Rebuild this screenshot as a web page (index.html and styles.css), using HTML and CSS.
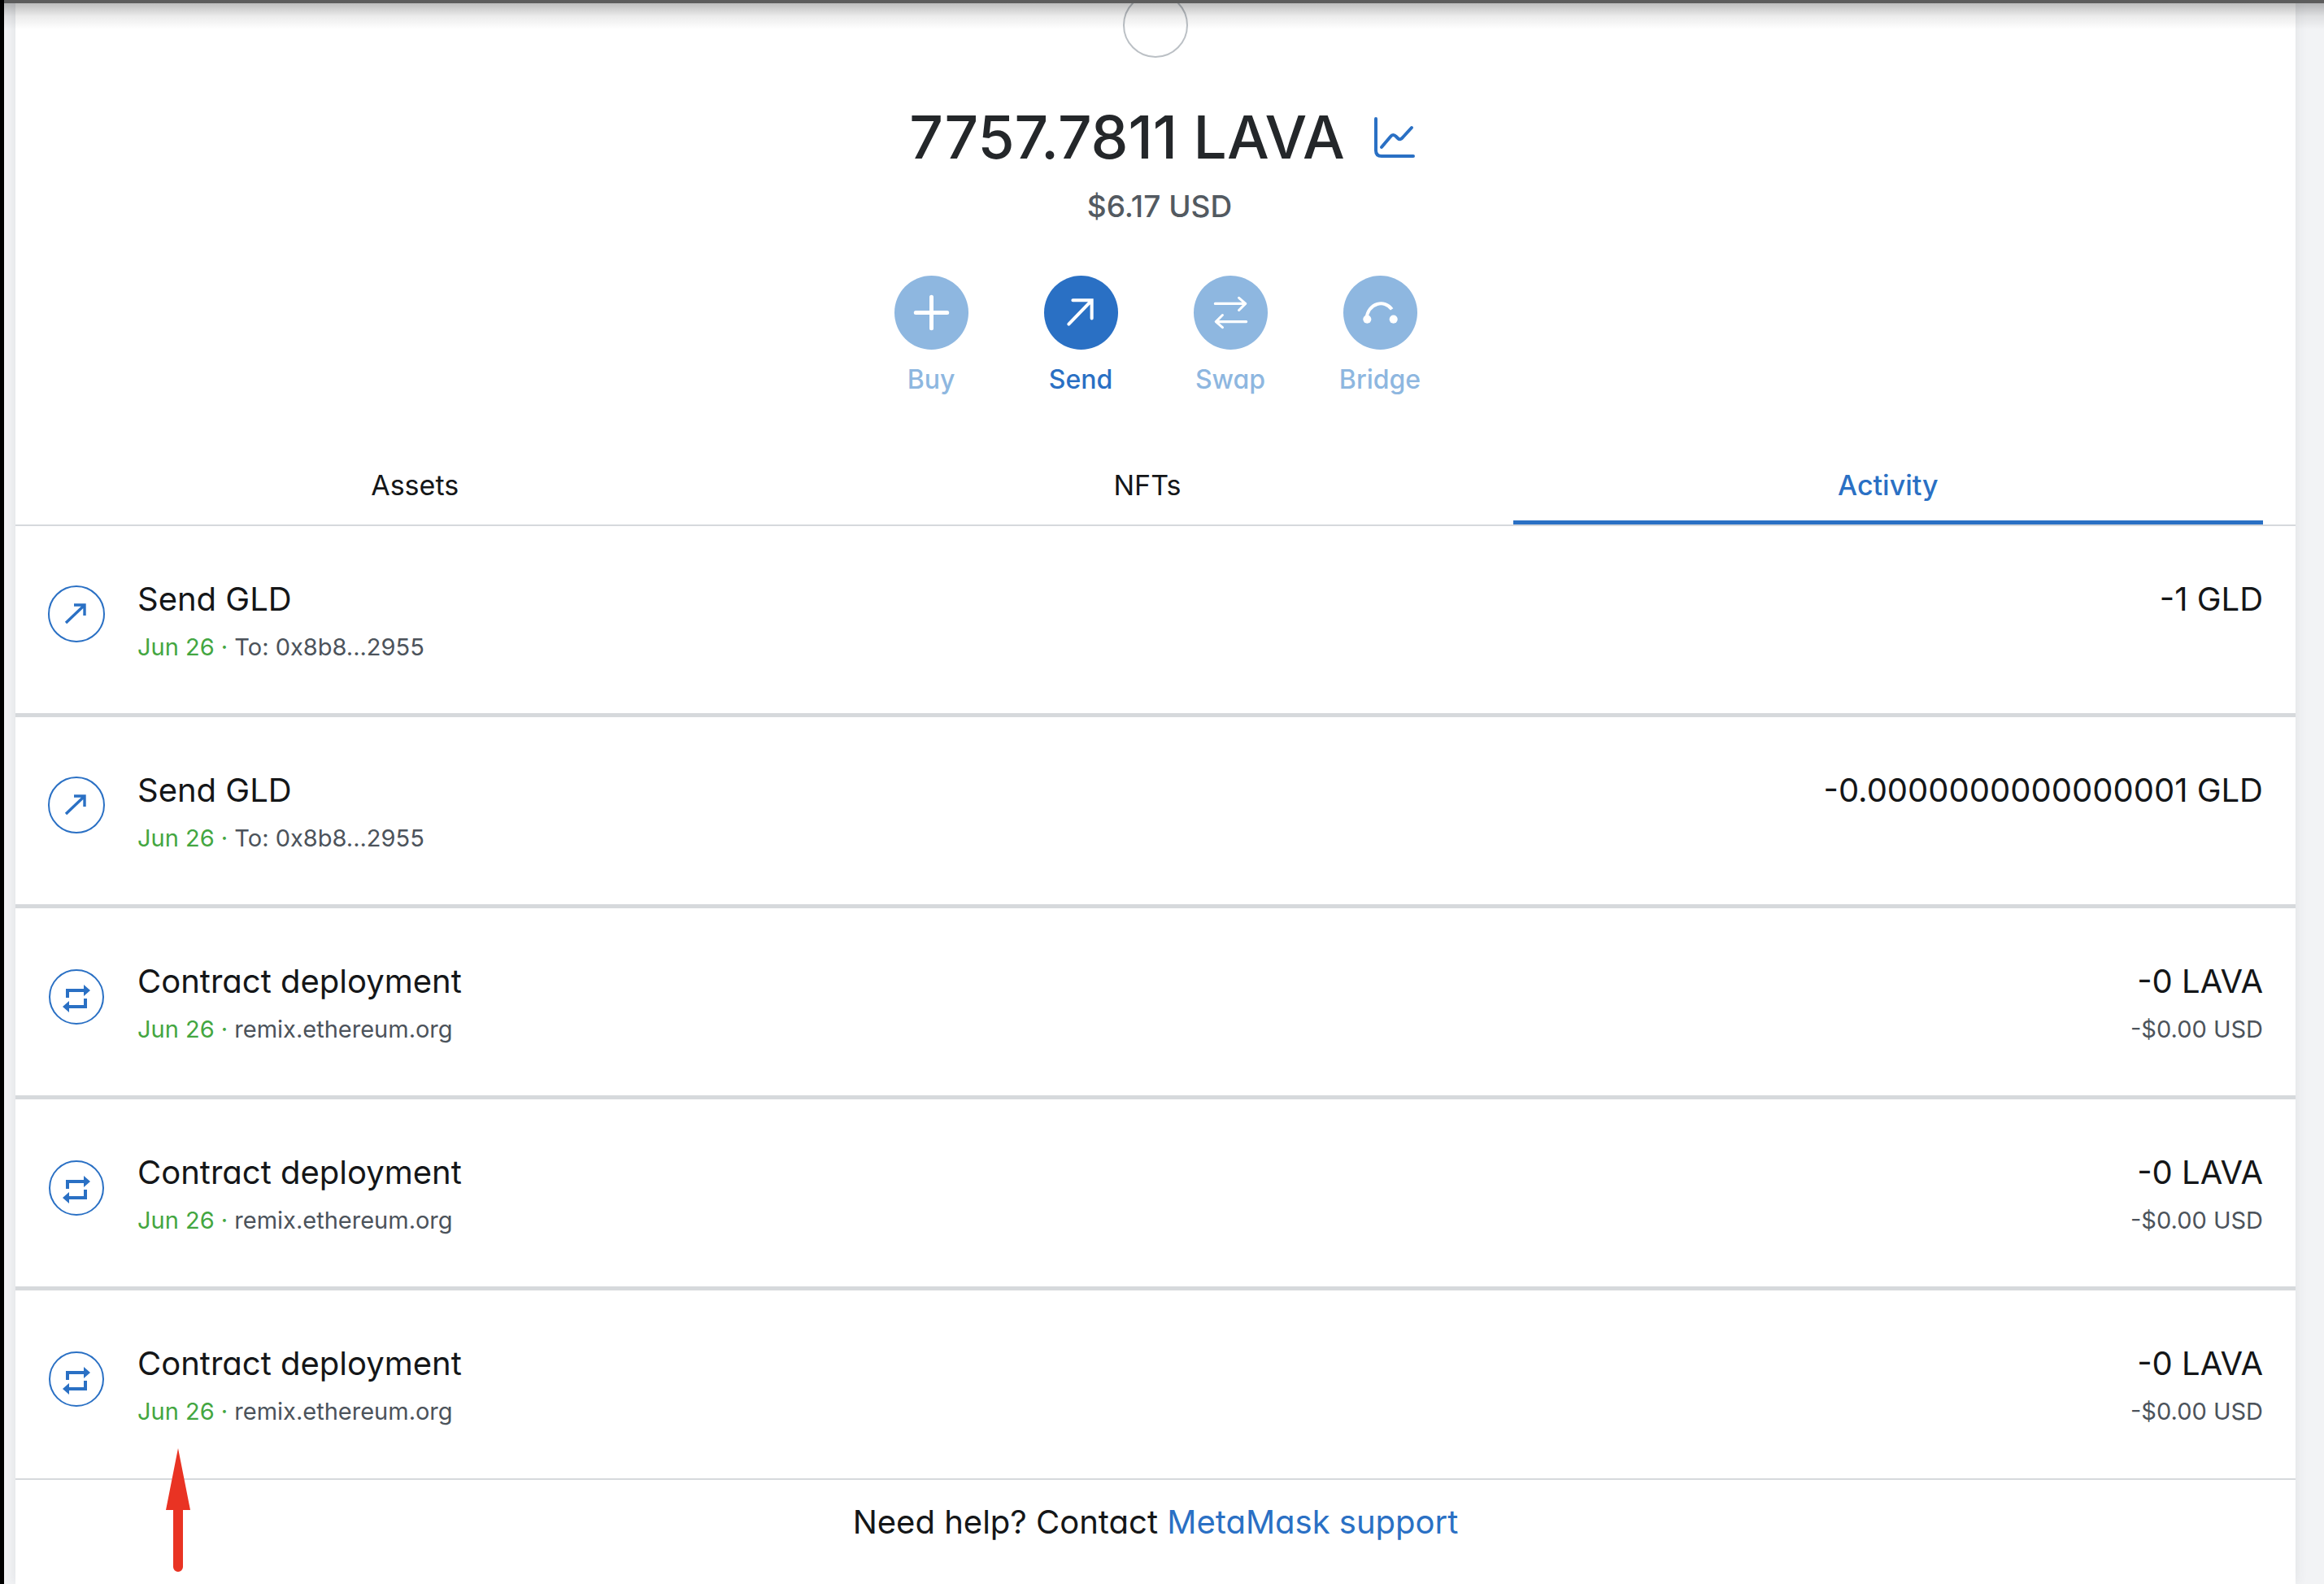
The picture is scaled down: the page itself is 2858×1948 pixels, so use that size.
FILE: index.html
```html
<!DOCTYPE html>
<html lang="en">
<head>
<meta charset="utf-8">
<meta name="viewport" content="width=device-width, initial-scale=1">
<title>MetaMask</title>
<link rel="stylesheet" href="styles.css">
</head>
<body>
<svg class="sprite" aria-hidden="true">
  <symbol id="icon-send" viewBox="-35 -35 70 70">
    <circle r="34" fill="none" stroke="currentColor" stroke-width="2"/>
    <path d="M-13 11 9 -10M-3 -11H10V2" fill="none" stroke="currentColor" stroke-width="3.4"/>
  </symbol>
  <symbol id="icon-contract" viewBox="-35 -35 70 70">
    <circle cy="1" r="33" fill="none" stroke="currentColor" stroke-width="2"/>
    <path d="M-11 2V-7H10M11 3V13H-10" fill="none" stroke="currentColor" stroke-width="4"/>
    <path d="M9 -14 17 -7 9 0ZM-9 6-17 13-9 20Z" fill="currentColor"/>
  </symbol>
</svg>
<div class="window-edge"></div>
<main class="wallet">
  <section class="overview">
    <div class="token-ring"></div>
    <div class="balance">
      <h1 class="balance-amount">7757.7811 LAVA</h1>
      <a class="portfolio" href="#" aria-label="Portfolio">
        <svg viewBox="0 0 50 50" fill="none" stroke="currentColor" stroke-width="4" stroke-linecap="round" stroke-linejoin="round"><path d="M2 2V41Q2 48 9 48H48M9 37 20 24Q23 20 27 24L29 26Q32 29 35 25L46 13"/></svg>
      </a>
    </div>
    <p class="balance-fiat">$6.17 USD</p>
    <div class="actions">
      <button class="action" disabled>
        <svg class="disc" viewBox="-45 -45 90 90" stroke-width="5" stroke-linecap="round"><path d="M-19 0H19M0 -19V19"/></svg>
        <span>Buy</span>
      </button>
      <button class="action">
        <svg class="disc" viewBox="-45 -45 90 90" stroke-width="4" stroke-linecap="round"><path d="M-15 14 12 -14M-10 -15H13V7"/></svg>
        <span>Send</span>
      </button>
      <button class="action" disabled>
        <svg class="disc" viewBox="-45 -45 90 90" stroke-width="3" stroke-linecap="round" stroke-linejoin="round"><path d="M-19 -11H18M10 -18 18 -11 10 -3M19 11H-18M-10 3-18 11-10 18"/></svg>
        <span>Swap</span>
      </button>
      <button class="action" disabled>
        <svg class="disc" viewBox="-45 -45 90 90" stroke-width="4"><path d="M-17 8C-15 -13 6 -16 14 -4"/><circle class="dot" cx="-16" cy="8" r="5"/><circle class="dot" cx="16" cy="8" r="5"/></svg>
        <span>Bridge</span>
      </button>
    </div>
  </section>
  <nav class="tabs">
    <button class="tab">Assets</button>
    <button class="tab">NFTs</button>
    <button class="tab tab-active">Activity</button>
  </nav>
  <ul class="activity">
    <li class="entry">
      <svg class="entry-icon"><use href="#icon-send"/></svg>
      <div class="entry-info">
        <h2 class="entry-title">Send GLD</h2>
        <p class="entry-sub"><span class="date">Jun 26 ·</span> To: 0x8b8...2955</p>
      </div>
      <div class="entry-value"><p class="entry-title">-1 GLD</p></div>
    </li>
    <li class="entry">
      <svg class="entry-icon"><use href="#icon-send"/></svg>
      <div class="entry-info">
        <h2 class="entry-title">Send GLD</h2>
        <p class="entry-sub"><span class="date">Jun 26 ·</span> To: 0x8b8...2955</p>
      </div>
      <div class="entry-value"><p class="entry-title">-0.0000000000000001 GLD</p></div>
    </li>
    <li class="entry">
      <svg class="entry-icon"><use href="#icon-contract"/></svg>
      <div class="entry-info">
        <h2 class="entry-title">Contract deployment</h2>
        <p class="entry-sub"><span class="date">Jun 26 ·</span> remix.ethereum.org</p>
      </div>
      <div class="entry-value"><p class="entry-title">-0 LAVA</p><p class="entry-sub">-$0.00 USD</p></div>
    </li>
    <li class="entry">
      <svg class="entry-icon"><use href="#icon-contract"/></svg>
      <div class="entry-info">
        <h2 class="entry-title">Contract deployment</h2>
        <p class="entry-sub"><span class="date">Jun 26 ·</span> remix.ethereum.org</p>
      </div>
      <div class="entry-value"><p class="entry-title">-0 LAVA</p><p class="entry-sub">-$0.00 USD</p></div>
    </li>
    <li class="entry">
      <svg class="entry-icon"><use href="#icon-contract"/></svg>
      <div class="entry-info">
        <h2 class="entry-title">Contract deployment</h2>
        <p class="entry-sub"><span class="date">Jun 26 ·</span> remix.ethereum.org</p>
      </div>
      <div class="entry-value"><p class="entry-title">-0 LAVA</p><p class="entry-sub">-$0.00 USD</p></div>
      <svg class="marker" viewBox="0 0 32 152" aria-hidden="true"><path d="M16 0 31 76H22V146A6 6 0 0 1 10 146V76H1Z"/></svg>
    </li>
  </ul>
  <footer class="help">Need help? Contact <a href="#">MetaMask support</a></footer>
</main>
</body>
</html>
```
FILE: styles.css
```css
* {
  box-sizing: border-box;
  margin: 0;
  padding: 0;
}

body {
  position: relative;
  min-height: 100vh;
  padding: 0 35px 0 14px;
  border-left: 5px solid #000;
  background: #f2f3f5;
  color: #141618;
  font-family: Inter, "Liberation Sans", sans-serif;
  font-feature-settings: "cv11";
  overflow-x: hidden;
}

button {
  border: 0;
  background: none;
  color: inherit;
  font: inherit;
  font-feature-settings: inherit;
}

a {
  color: #2a70c4;
  text-decoration: none;
}

.sprite {
  position: absolute;
  width: 0;
  height: 0;
}

/* toolbar edge and the shade it drops on the page */
.window-edge {
  position: absolute;
  z-index: 1;
  top: 0;
  left: -5px;
  right: 0;
  height: 36px;
  border-top: 4px solid #5c5c5c;
  background: linear-gradient(rgba(0, 0, 0, 0.26), rgba(0, 0, 0, 0.08) 50%, rgba(0, 0, 0, 0));
  pointer-events: none;
}

.wallet {
  min-height: 100vh;
  background: #fff;
  box-shadow: 0 0 14px rgba(60, 70, 80, 0.1);
}

.overview {
  display: flex;
  flex-direction: column;
  align-items: center;
  overflow: hidden;
}

.token-ring {
  width: 80px;
  height: 80px;
  margin-top: -9px;
  border: 2px solid #bbc0c5;
  border-radius: 50%;
}

.balance {
  display: flex;
  align-items: center;
  gap: 36px;
  margin-top: 50px;
  padding-left: 16px;
}

.balance-amount {
  color: #24272a;
  font-size: 73px;
  font-weight: 500;
  line-height: 96px;
}

.portfolio,
.portfolio svg {
  display: block;
  width: 50px;
  height: 50px;
}

.balance-fiat {
  margin-top: 13px;
  padding-left: 10px;
  color: #535a61;
  font-size: 37px;
  font-weight: 500;
  line-height: 48px;
}

.actions {
  display: grid;
  grid-template-columns: repeat(4, 184px);
  margin-top: 61px;
}

.action {
  display: flex;
  flex-direction: column;
  align-items: center;
  gap: 17px;
  color: #2a70c4;
  font-size: 32px;
  font-weight: 500;
  line-height: 40px;
}

.action:disabled {
  color: #8eb7e0;
}

.disc {
  width: 91px;
  height: 91px;
  border-radius: 50%;
  background: currentColor;
  fill: none;
  stroke: #fff;
}

.dot {
  fill: #fff;
  stroke: none;
}

.tabs {
  display: grid;
  grid-template-columns: 902fr 899fr 922fr;
  margin-top: 60px;
  padding: 0 40px;
  border-bottom: 2px solid #d6d9dc;
}

.tab {
  padding: 30px 0 23px;
  border-bottom: 5px solid transparent;
  font-size: 34px;
  line-height: 40px;
}

.tab-active {
  border-color: #2a70c4;
  color: #2a70c4;
  font-weight: 500;
}

.activity {
  list-style: none;
}

.entry {
  position: relative;
  display: flex;
  gap: 40px;
  padding: 62px 40px 61px;
  border-bottom: 5px solid #d6d9dc;
}

.entry:last-child {
  padding-bottom: 62px;
  border-bottom-width: 2px;
}

.entry-icon {
  width: 70px;
  height: 70px;
  margin-top: 11px;
  color: #2a70c4;
}

.entry-info {
  flex: 1;
}

.entry-value {
  text-align: right;
}

.entry-title {
  font-size: 40px;
  font-weight: 400;
  line-height: 56px;
}

.entry-sub {
  margin-top: 11px;
  color: #4c535b;
  font-size: 29px;
  line-height: 40px;
}

.date {
  color: #43a641;
}

.marker {
  position: absolute;
  top: 194px;
  left: 184px;
  width: 32px;
  height: 152px;
  fill: #e93323;
}

.help {
  padding: 28px 40px 51px;
  font-size: 40px;
  line-height: 48px;
  text-align: center;
}
```
